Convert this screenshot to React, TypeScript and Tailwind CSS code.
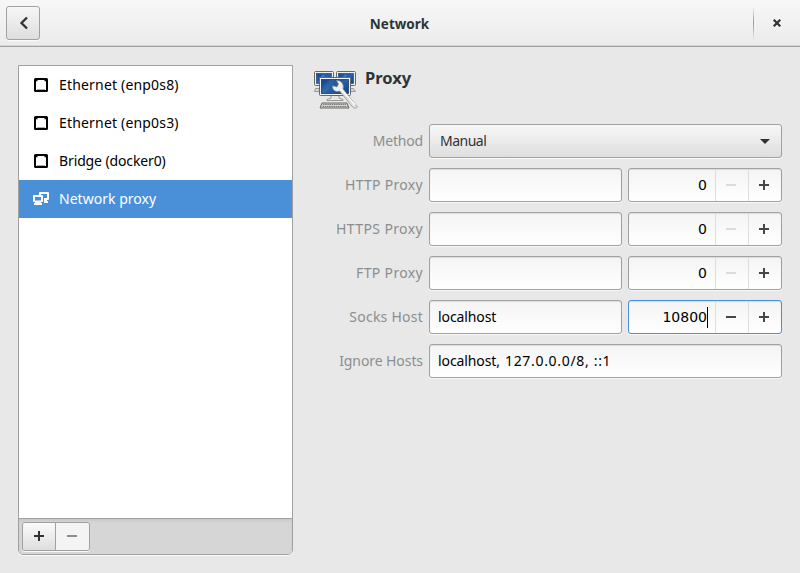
import type { ReactNode } from 'react';

function Plus({ color = '#2e3436' }: { color?: string }) {
  return (
    <svg width="10" height="10" viewBox="0 0 10 10" shapeRendering="crispEdges">
      <path d="M0 4h10v2H0zM4 0h2v10H4z" fill={color} />
    </svg>
  );
}

function Minus({ color = '#2e3436' }: { color?: string }) {
  return (
    <svg width="10" height="10" viewBox="0 0 10 10" shapeRendering="crispEdges">
      <path d="M0 4h10v2H0z" fill={color} />
    </svg>
  );
}

function WiredIcon() {
  return (
    <svg width="16" height="16" viewBox="0 0 16 16">
      <path
        fillRule="evenodd"
        fill="#000"
        d="M2.500 1h11A1.500 1.500 0 0 1 15 2.500v11a1.500 1.500 0 0 1-1.500 1.500h-11A1.500 1.500 0 0 1 1 13.500v-11A1.500 1.500 0 0 1 2.500 1zM4.500 3v1.200H3V13h10V4.200h-1.500V3z"
      />
      <path d="M4 12h8v1H4z" fill="#aaa" />
    </svg>
  );
}

function ProxyIcon() {
  return (
    <svg width="16" height="16" viewBox="0 0 16 16" fill="#fff">
      <path d="M7 1h8a1 1 0 0 1 1 1v6a1 1 0 0 1-1 1h-1v1h1v2h-4V7h3V3H8v1H6V2a1 1 0 0 1 1-1z" />
      <path
        fillRule="evenodd"
        d="M1 4h8a1 1 0 0 1 1 1v5a1 1 0 0 1-1 1H8v1h1v2H1v-2h1v-1H1a1 1 0 0 1-1-1V5a1 1 0 0 1 1-1zM2 6v3.500h6V6z"
      />
    </svg>
  );
}

function NetworkArt() {
  return (
    <svg width="44" height="42" viewBox="0 0 44 42">
      <defs>
        <linearGradient id="screen" x1="0" y1="0" x2="1" y2="1">
          <stop offset="0" stopColor="#16458e" />
          <stop offset="0.5" stopColor="#2860aa" />
          <stop offset="1" stopColor="#123f86" />
        </linearGradient>
        <linearGradient id="steel" x1="0" y1="0" x2="1" y2="1">
          <stop offset="0" stopColor="#fff" />
          <stop offset="0.6" stopColor="#d8d9d6" />
          <stop offset="1" stopColor="#e6e6e4" />
        </linearGradient>
      </defs>
      {[0.5, 22.5].map((x) => (
        <g key={x} transform={`translate(${x} 2.5)`}>
          <path d="M1 17h16l2 3H0z" fill="#d3d5d0" stroke="#888" strokeWidth=".8" />
          <rect width="19" height="14" rx="1" fill="#eeeeec" stroke="#666864" />
          <rect x="2" y="2" width="15" height="10" fill="url(#screen)" stroke="#173a6e" strokeWidth=".6" />
          <path d="M3 11L8 3h3L6 11z" fill="#6391c7" opacity=".5" />
        </g>
      ))}
      <path d="M17 26h8v3l4 1.500v1H13v-1l4-1.500z" fill="#e5e5e2" stroke="#888a85" strokeWidth=".8" />
      <rect x="5.500" y="8.500" width="31" height="18" rx="1" fill="#f3f3f1" stroke="#666864" />
      <rect x="7.500" y="10.500" width="27" height="14" fill="url(#screen)" stroke="#173a6e" strokeWidth=".8" />
      <path d="M8 20L15 11h6L12 24H8z" fill="#467cba" opacity=".3" />
      <path d="M8 34h25l2 5H6z" fill="#d3d7cf" stroke="#666864" />
      <path d="M9 35.500h23M8.500 37.500h25" stroke="#777972" strokeWidth="1" strokeDasharray="1.500 .7" />
      <path
        d="M22.500 11.500l2 3.500-1.500 3-4.500-1.200c-.2 4 2.500 6 5.500 5.700l1.500-.5 13 16c1.500 1.500 4 1.500 5 0L29 20c1.500-4.500-2-9-6.500-8.500z"
        fill="url(#steel)"
        stroke="#85877f"
        strokeWidth=".7"
      />
      <path d="M27 20l14 16" stroke="#fff" strokeWidth="1.500" />
    </svg>
  );
}

function SideRow({ icon, children, selected = false }: { icon: ReactNode; children: ReactNode; selected?: boolean }) {
  return (
    <li
      className={`flex h-[38px] items-center gap-[10px] pl-[14px] text-[14px] ${
        selected ? 'bg-[#4a90d9] text-white' : 'text-black'
      }`}
    >
      {icon}
      <span className="whitespace-nowrap">{children}</span>
    </li>
  );
}

function Field({ label, children }: { label: ReactNode; children: ReactNode }) {
  return (
    <div className="flex h-[34px] gap-1.5">
      <div className="flex w-[109px] shrink-0 items-center justify-end whitespace-nowrap text-[#8b8e8f]">{label}</div>
      {children}
    </div>
  );
}

const box =
  'flex items-center rounded-[3px] border bg-linear-to-b from-[#f4f4f4] to-white text-black shadow-[0_1px_0_#f8f8f8,inset_0_1px_1px_#ddd]';

function Entry({ children }: { children?: ReactNode }) {
  return <div className={`${box} w-[193px] border-[#a1a1a1] pl-2`}>{children}</div>;
}

function Spin({ value, active = false }: { value: string; active?: boolean }) {
  return (
    <div className={`${box} w-[154px] ${active ? 'border-[#4a90d9]' : 'border-[#a1a1a1]'}`}>
      <div className={`flex w-[86px] shrink-0 items-center justify-end ${active ? 'pr-[7px]' : 'pr-2'}`}>
        <span className="font-['DejaVu_Sans',sans-serif] text-[14px] font-normal">{value}</span>
        {active && <i className="h-[21px] w-px bg-black" />}
      </div>
      <div className="flex h-full w-[33px] shrink-0 items-center justify-center border-l border-[#dedede] pr-0.5">
        <Minus color={active ? '#41474a' : '#dcdcdc'} />
      </div>
      <div className="flex h-full w-[33px] shrink-0 items-center justify-center border-l border-[#dedede] pr-0.5">
        <Plus color="#41474a" />
      </div>
    </div>
  );
}

export default function App() {
  return (
    <div className="flex h-[573px] w-[800px] flex-col overflow-hidden bg-[#e8e8e8] font-['Noto_Sans','Open_Sans',sans-serif] text-[14px] font-[450] leading-5">
      <header className="flex h-[47px] shrink-0 items-center border-b border-[#a1a1a1] bg-linear-to-b from-[#f7f7f7] to-[#ebebeb] shadow-[inset_0_-1px_0_#d6d6d6]">
        <button className="ml-[6px] flex h-[34px] w-[34px] items-center justify-center rounded-[3px] border border-[#a1a1a1] bg-linear-to-b from-[#f6f6f6] to-[#dedede] pl-px shadow-[0_1px_0_#fafafa]">
          <svg width="16" height="16" viewBox="0 0 16 16">
            <path d="M11 2.500L5.500 8l5.500 5.500" fill="none" stroke="#2e3436" strokeWidth="2.300" />
          </svg>
        </button>
        <h1 className="w-[713px] pl-[6px] pt-[2px] text-center text-[13.500px] font-bold text-[#2e3436]">Network</h1>
        <i className="h-[34px] w-px bg-linear-to-b from-transparent via-[#999] to-transparent" />
        <button className="flex w-[46px] items-center justify-center">
          <svg width="8" height="8" viewBox="0 0 8 8">
            <path d="M.7.7l6.600 6.600M7.300.7L.7 7.300" stroke="#2e3436" strokeWidth="2.200" />
          </svg>
        </button>
      </header>

      <div className="flex flex-1 pl-[18px] pt-[18px]">
        <aside className="flex h-[490px] w-[275px] shrink-0 flex-col overflow-hidden rounded-b-[5px] border border-[#a1a1a1] bg-white shadow-[0_1px_0_#fafafa]">
          <ul className="flex-1">
            <SideRow icon={<WiredIcon />}><span className="tracking-[0.18px]">Ethernet (enp0s8)</span></SideRow>
            <SideRow icon={<WiredIcon />}><span className="tracking-[0.18px]">Ethernet (enp0s3)</span></SideRow>
            <SideRow icon={<WiredIcon />}><span className="tracking-[-0.12px]">Bridge (docker0)</span></SideRow>
            <SideRow selected icon={<ProxyIcon />}><span className="tracking-[0.03px]">Network proxy</span></SideRow>
          </ul>
          <div className="h-[36px] border-t border-[#a1a1a1] bg-[#d6d6d6] pl-[3px] pt-[3px] shadow-[inset_0_2px_3px_#c8c8c8]">
            <div className="flex h-[29px] w-[68px] overflow-hidden rounded-[3px] border border-[#a1a1a1] shadow-[0_1px_0_#f8f8f8]">
              <button className="flex w-[33px] items-center justify-center border-r border-[#a1a1a1] bg-linear-to-b from-[#fafafa] to-[#dedede] pb-0.5">
                <Plus />
              </button>
              <button className="flex w-[33px] items-center justify-center bg-[#f4f4f4] pb-0.5 pr-0.5">
                <Minus color="#8b8e8f" />
              </button>
            </div>
          </div>
        </aside>

        <main className="ml-[21px] w-[468px]">
          <div className="flex h-[59px] pt-1">
            <NetworkArt />
            <h2 className="ml-[7px] -mt-px text-[16.500px] font-bold text-[#2e3436]">Proxy</h2>
          </div>
          <div className="flex flex-col gap-[10px]">
            <Field label={<span className="tracking-[-0.2px]">Method</span>}>
              <div className="flex w-[353px] items-center justify-between rounded-[3px] border border-[#a1a1a1] bg-linear-to-b from-[#f7f7f7] to-[#dedede] pl-[10px] pr-[11px] text-[#2e3436] shadow-[0_1px_0_#fafafa]">
                <span className="tracking-[-0.5px]">Manual</span>
                <svg width="10" height="5" viewBox="0 0 10 5"><path d="M0 0h10L5 5z" fill="#2e3436" /></svg>
              </div>
            </Field>
            <Field label={<span className="tracking-[0.3px]">HTTP Proxy</span>}><Entry /><Spin value="0" /></Field>
            <Field label={<span className="tracking-[0.38px]">HTTPS Proxy</span>}><Entry /><Spin value="0" /></Field>
            <Field label={<span className="tracking-[0.34px]">FTP Proxy</span>}><Entry /><Spin value="0" /></Field>
            <Field label={<span className="tracking-[0.24px]">Socks Host</span>}>
              <Entry><span className="tracking-[-0.1px]">localhost</span></Entry>
              <Spin value="10800" active />
            </Field>
            <Field label={<span className="tracking-[-0.08px]">Ignore Hosts</span>}>
              <div className={`${box} w-[353px] border-[#a1a1a1] pl-2`}>
                <span className="whitespace-pre tracking-[-0.1px]">localhost, </span>
                <span className="pl-[1.500px] tracking-[0.68px]">127.0.0.0/8, ::1</span>
              </div>
            </Field>
          </div>
        </main>
      </div>
    </div>
  );
}
